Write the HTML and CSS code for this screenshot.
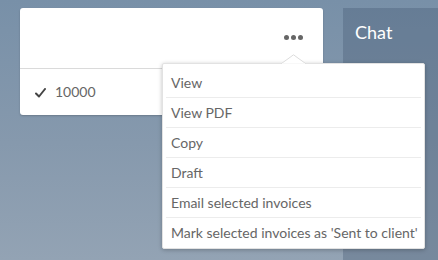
FILE: index.html
```html
<!DOCTYPE html>
<html>
<head>
<meta charset="utf-8">
<link rel="stylesheet" href="styles.css">
</head>
<body>
<div class="page">
  <div class="card">
    <div class="card-head">
      <button class="more" aria-label="More"><span></span><span></span><span></span></button>
    </div>
    <div class="card-body">
      <svg class="check" width="11" height="10" viewBox="0 0 11 10"><path d="M1 5.5 L4 8.5 L10 1" fill="none" stroke="#444" stroke-width="2" stroke-linecap="round" stroke-linejoin="round"/></svg>
      <span class="amount">10000</span>
    </div>
    <div class="menu">
      <svg class="arrow" width="26" height="10" viewBox="0 0 26 10"><polygon points="0.5,9.5 12.5,0.8 24.5,9.5" fill="#fff" stroke="#dcdcdc" stroke-width="1"/><rect x="1" y="9.2" width="23" height="2" fill="#fff"/></svg>
      <ul>
        <li>View</li>
        <li>View PDF</li>
        <li>Copy</li>
        <li>Draft</li>
        <li>Email selected invoices</li>
        <li>Mark selected invoices as 'Sent to client'</li>
      </ul>
    </div>
  </div>
  <aside class="chat"><h2>Chat</h2></aside>
</div>
</body>
</html>
```
FILE: styles.css
```css
html, body {
  margin: 0;
  height: 100%;
}
body {
  font-family: Lato, "Open Sans", sans-serif;
  background: linear-gradient(to bottom, #7890a8 0%, #8699ad 55%, #93a3b4 100%);
  overflow: hidden;
}
.page {
  display: flex;
  gap: 20px;
  padding: 8px 0 0 20px;
  height: 100%;
  box-sizing: border-box;
}
.card {
  position: relative;
  width: 303px;
  height: 107px;
  flex: none;
  background: #fff;
  border-radius: 3px;
  box-shadow: 0 1px 2px rgba(0,0,0,0.2);
}
.card-head {
  height: 60px;
  border-bottom: 1px solid #dadada;
  display: flex;
  align-items: center;
  justify-content: flex-end;
  padding-right: 20px;
}
.more {
  display: flex;
  gap: 2px;
  padding: 0;
  margin: 0;
  border: 0;
  background: none;
  margin-top: -1px;
}
.more span {
  width: 5px;
  height: 5px;
  border-radius: 50%;
  background: #666;
}
.card-body {
  height: 46px;
  display: flex;
  align-items: center;
  padding-left: 15px;
  font-size: 14px;
  color: #666;
}
.check {
  margin-right: 9px;
  margin-top: 1px;
}
.amount {
  line-height: 46px;
}
.menu {
  position: absolute;
  left: 142px;
  top: 55px;
  width: 261px;
  background: #fff;
  border: 1px solid #e2e2e2;
  border-radius: 2px;
  box-shadow: 0 1px 4px rgba(0,0,0,0.25);
  padding: 4px 0 1px;
}
.arrow {
  position: absolute;
  left: 118px;
  top: -10px;
}
.menu ul {
  list-style: none;
  margin: 0;
  padding: 0;
}
.menu li {
  margin: 0 3px;
  padding: 0 5px;
  height: 29px;
  line-height: 29px;
  font-size: 14px;
  color: #666;
  border-bottom: 1px solid #ececec;
  white-space: nowrap;
}
.menu li:last-child {
  border-bottom: 0;
}
.chat {
  flex: 1;
  background: rgba(70, 90, 115, 0.35);
}
.chat h2 {
  margin: 0;
  padding: 14px 12px 0;
  font-size: 18px;
  line-height: 20px;
  font-weight: 400;
  color: #fff;
}
```
